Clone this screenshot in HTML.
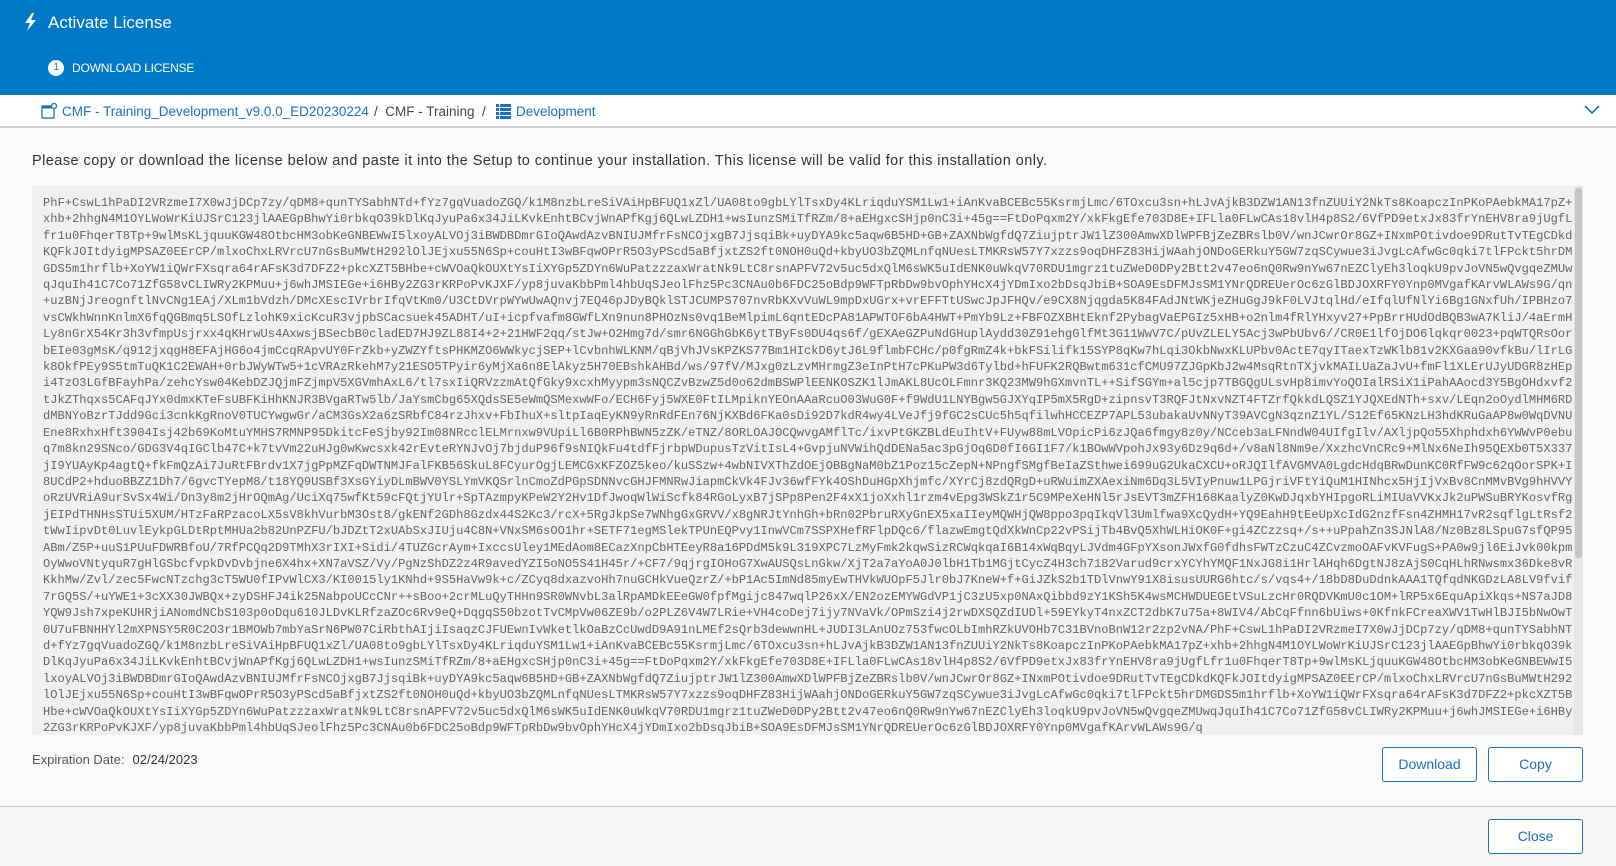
<!DOCTYPE html>
<html><head><meta charset="utf-8"><style>
*{box-sizing:border-box;margin:0;padding:0}
body{width:1616px;height:866px;overflow:hidden;background:#fafafa;font-family:"Liberation Sans",sans-serif;position:relative}
.hdr{position:absolute;left:0;top:0;width:1616px;height:95px;background:#0078c8;color:#fff}
.title{position:absolute;left:48px;top:13px;font-size:17px}
.bolt{position:absolute;left:23px;top:13px}
.step{position:absolute;left:48px;top:60px;font-size:12px;display:flex;align-items:center;letter-spacing:-0.2px}
.step b{display:inline-block;width:16px;height:16px;border-radius:50%;background:#fff;color:#0078c8;font-size:10px;text-align:center;line-height:16px;margin-right:8px;font-weight:normal}
.bc{position:absolute;left:0;top:95px;width:1616px;height:33px;background:#fff;border-bottom:2px solid #d0d0d0;font-size:13.5px;color:#1a6fb8}
.bc span{position:absolute;top:9px}
.msg{position:absolute;left:32px;top:153px;font-size:14.5px;letter-spacing:.45px;color:#333}
.box{position:absolute;left:32px;top:186px;width:1551px;height:549px;background:#f0f0f0;overflow:hidden}
.txt{position:absolute;left:11px;top:9px;width:1530px;font-family:"Liberation Mono",monospace;font-size:12.09px;line-height:16.4px;color:#666;word-break:break-all}
.sb{position:absolute;right:0;top:0;width:9px;height:549px;background:#e6e6e6}
.sb i{position:absolute;left:1px;top:2px;width:7px;height:370px;background:#c4c4c4;border-radius:3px}
.exp{position:absolute;left:32px;top:752px;font-size:13px;color:#555}
.exp b{font-weight:normal;color:#333;margin-left:8px}
.btn{position:absolute;width:95px;height:35px;border:1px solid #1a6fb8;border-radius:3px;background:#fff;color:#1a6fb8;font-size:14px;text-align:center;line-height:33px}
.foot{position:absolute;left:0;top:806px;width:1616px;height:60px;border-top:1px solid #ccc;background:#f7f7f7}
</style></head><body>
<div class="hdr">
<svg class="bolt" width="16" height="18" viewBox="0 0 16 18"><path d="M9 0L2 10h5l-3 8 9-11H8l3-7z" fill="#fff"/></svg>
<div class="title">Activate License</div>
<div class="step"><b>1</b>DOWNLOAD LICENSE</div>
</div>
<div class="bc">
<svg style="position:absolute;left:41px;top:8px" width="16" height="16" viewBox="0 0 16 16"><rect x="1" y="3" width="12" height="12" fill="none" stroke="#1a6fb8" stroke-width="1.3"/><rect x="1" y="3" width="12" height="2.5" fill="#1a6fb8"/><circle cx="13" cy="3" r="2.5" fill="#fff" stroke="#1a6fb8" stroke-width="1.2"/></svg>
<span style="left:62px">CMF - Training_Development_v9.0.0_ED20230224</span>
<span style="left:374px;color:#444">/&nbsp; CMF - Training &nbsp;/</span>
<svg style="position:absolute;left:496px;top:9px" width="15" height="15" viewBox="0 0 15 15" fill="#1a6fb8"><rect x="0" y="0" width="3" height="3"/><rect x="4" y="0" width="11" height="3"/><rect x="0" y="4" width="3" height="3"/><rect x="4" y="4" width="11" height="3"/><rect x="0" y="8" width="3" height="3"/><rect x="4" y="8" width="11" height="3"/><rect x="0" y="12" width="3" height="3"/><rect x="4" y="12" width="11" height="3"/></svg>
<span style="left:516px">Development</span>
<svg style="position:absolute;left:1584px;top:10px" width="16" height="10" viewBox="0 0 16 10"><path d="M1 1l7 7 7-7" fill="none" stroke="#1a6fb8" stroke-width="1.6"/></svg>
</div>
<div class="msg">Please copy or download the license below and paste it into the Setup to continue your installation. This license will be valid for this installation only.</div>
<div class="box"><div class="txt">PhF+CswL1hPaDI2VRzmeI7X0wJjDCp7zy/qDM8+qunTYSabhNTd+fYz7gqVuadoZGQ/k1M8nzbLreSiVAiHpBFUQ1xZl/UA08to9gbLYlTsxDy4KLriqduYSM1Lw1+iAnKvaBCEBc55KsrmjLmc/6TOxcu3sn+hLJvAjkB3DZW1AN13fnZUUiY2NkTs8KoapczInPKoPAebkMA17pZ+xhb+2hhgN4M1OYLWoWrKiUJSrC123jlAAEGpBhwYi0rbkqO39kDlKqJyuPa6x34JiLKvkEnhtBCvjWnAPfKgj6QLwLZDH1+wsIunzSMiTfRZm/8+aEHgxcSHjp0nC3i+45g==FtDoPqxm2Y/xkFkgEfe703D8E+IFLla0FLwCAs18vlH4p8S2/6VfPD9etxJx83frYnEHV8ra9jUgfLfr1u0FhqerT8Tp+9wlMsKLjquuKGW48OtbcHM3obKeGNBEWwI5lxoyALVOj3iBWDBDmrGIoQAwdAzvBNIUJMfrFsNCOjxgB7JjsqiBk+uyDYA9kc5aqw6B5HD+GB+ZAXNbWgfdQ7ZiujptrJW1lZ300AmwXDlWPFBjZeZBRslb0V/wnJCwrOr8GZ+INxmPOtivdoe9DRutTvTEgCDkdKQFkJOItdyigMPSAZ0EErCP/mlxoChxLRVrcU7nGsBuMWtH292lOlJEjxu55N6Sp+couHtI3wBFqwOPrR5O3yPScd5aBfjxtZS2ft0NOH0uQd+kbyUO3bZQMLnfqNUesLTMKRsW57Y7xzzs9oqDHFZ83HijWAahjONDoGERkuY5GW7zqSCywue3iJvgLcAfwGc0qki7tlFPckt5hrDMGDS5m1hrflb+XoYW1iQWrFXsqra64rAFsK3d7DFZ2+pkcXZT5BHbe+cWVOaQkOUXtYsIiXYGp5ZDYn6WuPatzzzaxWratNk9LtC8rsnAPFV72v5uc5dxQlM6sWK5uIdENK0uWkqV70RDU1mgrz1tuZWeD0DPy2Btt2v47eo6nQ0Rw9nYw67nEZClyEh3loqkU9pvJoVN5wQvgqeZMUwqJquIh41C7Co71ZfG58vCLIWRy2KPMuu+j6whJMSIEGe+i6HBy2ZG3rKRPoPvKJXF/yp8juvaKbbPml4hbUqSJeolFhz5Pc3CNAu0b6FDC25oBdp9WFTpRbDw9bvOphYHcX4jYDmIxo2bDsqJbiB+SOA9EsDFMJsSM1YNrQDREUerOc6zGlBDJOXRFY0Ynp0MVgafKArvWLAWs9G/qn+uzBNjJreognftlNvCNg1EAj/XLm1bVdzh/DMcXEscIVrbrIfqVtKm0/U3CtDVrpWYwUwAQnvj7EQ46pJDyBQklSTJCUMPS707nvRbKXvVuWL9mpDxUGrx+vrEFFTtUSwcJpJFHQv/e9CX8Njqgda5K84FAdJNtWKjeZHuGgJ9kF0LVJtqlHd/eIfqlUfNlYi6Bg1GNxfUh/IPBHzo7vsCWkhWnnKnlmX6fqQGBmq5LSOfLzlohK9xicKcuR3vjpbSCacsuek45ADHT/uI+icpfvafm8GWfLXn9nun8PHOzNs0vq1BeMlpimL6qntEDcPA81APWTOF6bA4HWT+PmYb9Lz+FBFOZXBHtEknf2PybagVaEPGIz5xHB+o2nlm4fRlYHxyv27+PpBrrHUdOdBQB3wA7KliJ/4aErmHLy8nGrX54Kr3h3vfmpUsjrxx4qKHrwUs4AxwsjBSecbB0cladED7HJ9ZL88I4+2+21HWF2qq/stJw+O2Hmg7d/smr6NGGhGbK6ytTByFs0DU4qs6f/gEXAeGZPuNdGHuplAydd30Z91ehgGlfMt3G11WwV7C/pUvZLELY5Acj3wPbUbv6//CR0E1lfOjDO6lqkqr0023+pqWTQRsOorbEIe03gMsK/q912jxqgH8EFAjHG6o4jmCcqRApvUY0FrZkb+yZWZYftsPHKMZO6WWkycjSEP+lCvbnhWLKNM/qBjVhJVsKPZKS77Bm1HIckD6ytJ6L9flmbFCHc/p0fgRmZ4k+bkFSilifk15SYP8qKw7hLqi3OkbNwxKLUPbv0ActE7qyITaexTzWKlb81v2KXGaa90vfkBu/lIrLGk8OkfPEy9S5tmTuQK1C2EWAH+0rbJWyWTw5+1cVRAzRkehM7y21ESO5TPyir6yMjXa6n8ElAkyz5H70EBshkAHBd/ws/97fV/MJxg0zLzvMHrmgZ3eInPtH7cPKuPW3d6Tylbd+hFUFK2RQBwtm631cfCMU97ZJGpKbJ2w4MsqRtnTXjvkMAILUaZaJvU+fmFl1XLErUJyUDGR8zHEpi4TzO3LGfBFayhPa/zehcYsw04KebDZJQjmFZjmpV5XGVmhAxL6/tl7sxIiQRVzzmAtQfGky9xcxhMyypm3sNQCZvBzwZ5d0o62dmBSWPlEENKOSZK1lJmAKL8UcOLFmnr3KQ23MW9hGXmvnTL++SifSGYm+al5cjp7TBGQgULsvHp8imvYoQOIalRSiX1iPahAAocd3Y5BgOHdxvf2tJkZThqxs5CAFqJYx0dmxKTeFsUBFKiHhKNJR3BVgaRTw5lb/JaYsmCbg65XQdsSE5eWmQSMexwWFo/ECH6Fyj5WXE0FtILMpiknYEOnAAaRcuO03WuG0F+f9WdU1LNYBgw5GJXYqIP5mX5RgD+zipnsvT3RQFJtNxvNZT4FTZrfQkkdLQSZ1YJQXEdNTh+sxv/LEqn2oOydlMHM6RDdMBNYoBzrTJdd9Gci3cnkKgRnoV0TUCYwgwGr/aCM3GsX2a6zSRbfC84rzJhxv+FbIhuX+sltpIaqEyKN9yRnRdFEn76NjKXBd6FKa0sDi92D7kdR4wy4LVeJfj9fGC2sCUc5h5qfilwhHCCEZP7APL53ubakaUvNNyT39AVCgN3qznZ1YL/S12Ef65KNzLH3hdKRuGaAP8w0WqDVNUEne8RxhxHft3904Isj42b69KoMtuYMHS7RMNP95DkitcFeSjby92Im08NRcclELMrnxw9VUpiLl6B0RPhBWN5zZK/eTNZ/8ORLOAJOCQwvgAMflTc/ixvPtGKZBLdEuIhtV+FUyw88mLVOpicPi6zJQa6fmgy8z0y/NCceb3aLFNndW04UIfgIlv/AXljpQo55Xhphdxh6YWWvP0ebuq7m8kn29SNco/GDG3V4qIGClb47C+k7tvVm22uHJg0wKwcsxk42rEvteRYNJvOj7bjduP96f9sNIQkFu4tdfFjrbpWDupusTzVitIsL4+GvpjuNVWihQdDENa5ac3pGjOqGD0fI6GI1F7/k1BOwWVpohJx93y6Dz9q6d+/v8aNl8Nm9e/XxzhcVnCRc9+MlNx6NeIh95QEXb0T5X337jI9YUAyKp4agtQ+fkFmQzAi7JuRtFBrdv1X7jgPpMZFqDWTNMJFalFKB56SkuL8FCyurOgjLEMCGxKFZOZ5keo/kuSSzw+4wbNIVXThZdOEjOBBgNaM0bZ1Poz15cZepN+NPngfSMgfBeIaZSthwei699uG2UkaCXCU+oRJQIlfAVGMVA0LgdcHdqBRwDunKC0RfFW9c62qOorSPK+I8UCdP2+hduoBBZZ1Dh7/6gvcTYepM8/t18YQ9USBf3XsGYiyDLmBWV0YSLYmVKQSrlnCmoZdPGpSDNNvcGHJFMNRwJiapmCkVk4FJv36wfFYk4OShDuHGpXhjmfc/XYrCj8zdQRgD+uRWuimZXAexiNm6Dq3L5VIyPnuw1LPGjriVFtYiQuM1HINhcx5HjIjVxBv8CnMMvBVg9hHVVYoRzUVRiA9urSvSx4Wi/Dn3y8m2jHrOQmAg/UciXq75wfKt59cFQtjYUlr+SpTAzmpyKPeW2Y2Hv1DfJwoqWlWiScfk84RGoLyxB7jSPp8Pen2F4xX1joXxhl1rzm4vEpg3WSkZ1r5C9MPeXeHNl5rJsEVT3mZFH168KaalyZ0KwDJqxbYHIpgoRLiMIUaVVKxJk2uPWSuBRYKosvfRgjEIPdTHNHsSTUi5XUM/HTzFaRPzacoLX5sV8khVurbM3Ost8/gkENf2GDh8Gzdx44S2Kc3/rcX+5RgJkpSe7WNhgGxGRVV/x8gNRJtYnhGh+bRn02PbruRXyGnEX5xaIIeyMQWHjQW8ppo3pqIkqVl3Umlfwa9XcQydH+YQ9EahH9tEeUpXcIdG2nzfFsn4ZHMH17vR2sqflgLtRsf2tWwIipvDt0LuvlEykpGLDtRptMHUa2b82UnPZFU/bJDZtT2xUAbSxJIUju4C8N+VNxSM6sOO1hr+SETF71egMSlekTPUnEQPvy1InwVCm7SSPXHefRFlpDQc6/flazwEmgtQdXkWnCp22vPSijTb4BvQ5XhWLHiOK0F+gi4ZCzzsq+/s++uPpahZn3SJNlA8/Nz0Bz8LSpuG7sfQP95ABm/Z5P+uuS1PUuFDWRBfoU/7RfPCQq2D9TMhX3rIXI+Sidi/4TUZGcrAym+IxccsUley1MEdAom8ECazXnpCbHTEeyR8a16PDdM5k9L319XPC7LzMyFmk2kqwSizRCWqkqaI6B14xWqBqyLJVdm4GFpYXsonJWxfG0fdhsFWTzCzuC4ZCvzmoOAFvKVFugS+PA0w9jl6EiJvk00kpmOyWwoVNtyquR7gHlGSbcfvpkDvDvbjne6X4hx+XN7aVSZ/Vy/PgNzShDZ2z4R9avedYZI5oNO5S41H45r/+CF7/9qjrgIOHoG7XwAUSQsLnGkw/XjT2a7aYoA0J0lbH1Tb1MGjtCycZ4H3ch7182Varud9crxYCYhYMQF1NxJG8i1HrlAHqh6DgtNJ8zAjS0CqHLhRNwsmx36Dke8vRKkhMw/Zvl/zec5FwcNTzchg3cT5WU0fIPvWlCX3/KI0015ly1KNhd+9S5HaVw9k+c/ZCyq8dxazvoHh7nuGCHkVueQzrZ/+bP1Ac5ImNd85myEwTHVkWUOpF5Jlr0bJ7KneW+f+GiJZkS2b1TDlVnwY91X8isusUURG6htc/s/vqs4+/18bD8DuDdnkAAA1TQfqdNKGDzLA8LV9fvif7rGQ5S/+uYWE1+3cXX30JWBQx+zyDSHFJ4ik25NabpoUCcCNr++sBoo+2crMLuQyTHHn9SR0WNvbL3alRpAMDkEEeGW0fpfMgijc847wqlP26xX/EN2ozEMYWGdVP1jC3zU5xp0NAxQibbd9zY1KSh5K4wsMCHWDUEGEtVSuLzcHr0RQDVKmU0c1OM+lRP5x6EquApiXkqs+NS7aJD8YQW9Jsh7xpeKUHRjiANomdNCbS103p0oDqu610JLDvKLRfzaZOc6Rv9eQ+DqgqS50bzotTvCMpVw06ZE9b/o2PLZ6V4W7LRie+VH4coDej7ijy7NVaVk/OPmSzi4j2rwDXSQZdIUDl+59EYkyT4nxZCT2dbK7u75a+8WIV4/AbCqFfnn6bUiws+0KfnkFCreaXWV1TwHlBJI5bNwOwT0U7uFBNHHYl2mXPNSY5R0C2O3r1BMOWb7mbYaSrN6PW07CiRbthAIjiIsaqzCJFUEwnIvWketlkOaBzCcUwdD9A91nLMEf2sQrb3dewwnHL+JUDI3LAnUOz753fwcOLbImhRZkUVOHb7C31BVnoBnW12r2zp2vNA/PhF+CswL1hPaDI2VRzmeI7X0wJjDCp7zy/qDM8+qunTYSabhNTd+fYz7gqVuadoZGQ/k1M8nzbLreSiVAiHpBFUQ1xZl/UA08to9gbLYlTsxDy4KLriqduYSM1Lw1+iAnKvaBCEBc55KsrmjLmc/6TOxcu3sn+hLJvAjkB3DZW1AN13fnZUUiY2NkTs8KoapczInPKoPAebkMA17pZ+xhb+2hhgN4M1OYLWoWrKiUJSrC123jlAAEGpBhwYi0rbkqO39kDlKqJyuPa6x34JiLKvkEnhtBCvjWnAPfKgj6QLwLZDH1+wsIunzSMiTfRZm/8+aEHgxcSHjp0nC3i+45g==FtDoPqxm2Y/xkFkgEfe703D8E+IFLla0FLwCAs18vlH4p8S2/6VfPD9etxJx83frYnEHV8ra9jUgfLfr1u0FhqerT8Tp+9wlMsKLjquuKGW48OtbcHM3obKeGNBEWwI5lxoyALVOj3iBWDBDmrGIoQAwdAzvBNIUJMfrFsNCOjxgB7JjsqiBk+uyDYA9kc5aqw6B5HD+GB+ZAXNbWgfdQ7ZiujptrJW1lZ300AmwXDlWPFBjZeZBRslb0V/wnJCwrOr8GZ+INxmPOtivdoe9DRutTvTEgCDkdKQFkJOItdyigMPSAZ0EErCP/mlxoChxLRVrcU7nGsBuMWtH292lOlJEjxu55N6Sp+couHtI3wBFqwOPrR5O3yPScd5aBfjxtZS2ft0NOH0uQd+kbyUO3bZQMLnfqNUesLTMKRsW57Y7xzzs9oqDHFZ83HijWAahjONDoGERkuY5GW7zqSCywue3iJvgLcAfwGc0qki7tlFPckt5hrDMGDS5m1hrflb+XoYW1iQWrFXsqra64rAFsK3d7DFZ2+pkcXZT5BHbe+cWVOaQkOUXtYsIiXYGp5ZDYn6WuPatzzzaxWratNk9LtC8rsnAPFV72v5uc5dxQlM6sWK5uIdENK0uWkqV70RDU1mgrz1tuZWeD0DPy2Btt2v47eo6nQ0Rw9nYw67nEZClyEh3loqkU9pvJoVN5wQvgqeZMUwqJquIh41C7Co71ZfG58vCLIWRy2KPMuu+j6whJMSIEGe+i6HBy2ZG3rKRPoPvKJXF/yp8juvaKbbPml4hbUqSJeolFhz5Pc3CNAu0b6FDC25oBdp9WFTpRbDw9bvOphYHcX4jYDmIxo2bDsqJbiB+SOA9EsDFMJsSM1YNrQDREUerOc6zGlBDJOXRFY0Ynp0MVgafKArvWLAWs9G/q</div><div class="sb"><i></i></div></div>
<div class="exp">Expiration Date:<b>02/24/2023</b></div>
<div class="btn" style="left:1382px;top:747px">Download</div>
<div class="btn" style="left:1488px;top:747px">Copy</div>
<div class="foot"><div class="btn" style="left:1488px;top:12px">Close</div></div>
</body></html>
